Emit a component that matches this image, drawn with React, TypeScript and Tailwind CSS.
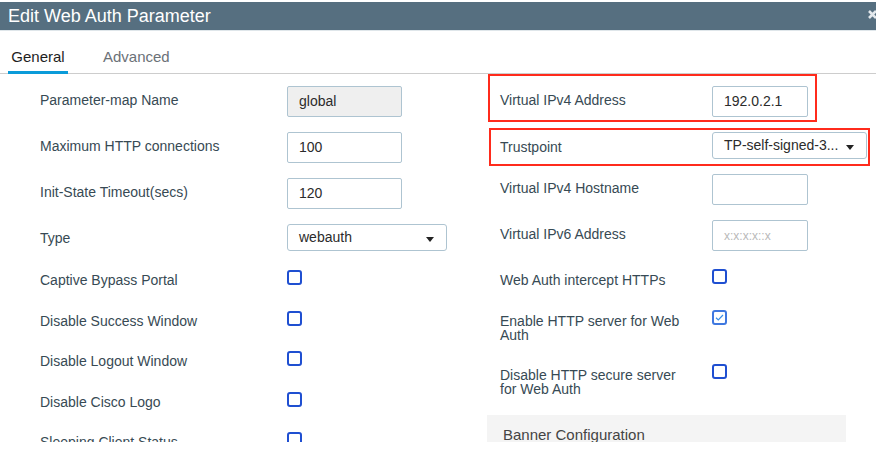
import React from 'react';

// Edit Web Auth Parameter dialog (General tab)

const labelColor = 'text-[#374a54]';

const TextBox = ({ value, placeholder, disabled, w }: { value?: string; placeholder?: string; disabled?: boolean; w: string }) => (
  <div
    className={`flex h-[31px] ${w} items-center rounded-[2px] border border-[#aec4d1] pl-[11px] text-[14px] ${
      disabled ? 'bg-[#efefef]' : 'bg-white'
    }`}
  >
    {value ? (
      <span className="text-[#2b2b2b]">{value}</span>
    ) : (
      <span className="text-[12px] text-[#b9b9b9]">{placeholder}</span>
    )}
  </div>
);

const Select = ({ value, w }: { value: string; w: string }) => (
  <div className={`flex h-[27px] ${w} items-center justify-between rounded-[3px] border border-[#aec4d1] bg-white pl-[11px] pr-[12px] text-[14px] text-[#2b2b2b]`}>
    <span>{value}</span>
    <svg width="8" height="5" viewBox="0 0 8 5" className="mt-[3px]">
      <path d="M0 0 L8 0 L4 5 Z" fill="#222" />
    </svg>
  </div>
);

const Checkbox = ({ checked }: { checked?: boolean }) => (
  <span
    className={`flex h-[15px] w-[15px] items-center justify-center rounded-[3px] border-2 bg-white ${
      checked ? 'border-[#3f78e0]' : 'border-[#1f4fd1]'
    }`}
  >
    {checked && (
      <svg width="9" height="7" viewBox="0 0 9 7">
        <path d="M1 3.8 L3.3 6 L8 1" fill="none" stroke="#3a8ee6" strokeWidth="1.2" />
      </svg>
    )}
  </span>
);

const leftInputs = [
  { label: 'Parameter-map Name', el: <TextBox value="global" disabled w="w-[115px]" /> },
  { label: 'Maximum HTTP connections', el: <TextBox value="100" w="w-[115px]" /> },
  { label: 'Init-State Timeout(secs)', el: <TextBox value="120" w="w-[115px]" /> },
  { label: 'Type', el: <Select value="webauth" w="w-[160px]" /> },
];

const leftChecks = [
  'Captive Bypass Portal',
  'Disable Success Window',
  'Disable Logout Window',
  'Disable Cisco Logo',
  'Sleeping Client Status',
];

export default function App() {
  return (
    <div
      className="h-[458px] w-[876px] overflow-hidden bg-white"
      style={{ fontFamily: '"Liberation Sans", Arial, Helvetica, sans-serif' }}
    >
      {/* header */}
      <div className="mt-[2px] flex h-[29px] items-center justify-between border-b border-[#dfe6ea] bg-[#566f80] pl-[8px]">
        <span className="text-[18px] leading-none text-white">Edit Web Auth Parameter</span>
        <svg width="9" height="9" viewBox="0 0 9 9" className="-mr-[1px] mb-[3px]">
          <path d="M1 1 L8 8 M8 1 L1 8" stroke="#e3e8ec" strokeWidth="2.6" />
        </svg>
      </div>

      {/* tabs */}
      <div className="flex h-[43px] items-end border-b border-[#cdcdcd] pl-[8px]">
        <div className="-mb-[1px] w-[60px] border-b-[3px] border-[#0a9bd9] pb-[4px] text-center text-[15px] leading-[20px] text-[#1e1e1e]">
          General
        </div>
        <div className="ml-[35px] pb-[6px] text-[15px] leading-[20px] text-[#6b7177]">Advanced</div>
      </div>

      {/* body, clipped */}
      <div className="flex h-[368px] overflow-hidden">
        {/* left column */}
        <div className="w-[488px] pt-[4px]">
          {leftInputs.map((r) => (
            <div key={r.label} className="flex h-[46px] items-start">
              <div className={`w-[287px] pl-[40px] pt-[12px] text-[14px] leading-[20px] ${labelColor}`}>{r.label}</div>
              <div className="mt-[8px]">{r.el}</div>
            </div>
          ))}
          {leftChecks.map((l) => (
            <div key={l} className="flex h-[40.5px] items-start pt-[8px]">
              <div className={`w-[287px] pl-[40px] text-[14px] leading-[20px] ${labelColor}`}>{l}</div>
              <Checkbox />
            </div>
          ))}
        </div>

        {/* right column */}
        <div className="flex-1">
          <div className="flex h-[48px] w-[329px] items-start border-2 border-[#ff2b1c]">
            <div className={`w-[222px] pl-[10px] pt-[14px] text-[14px] leading-[20px] ${labelColor}`}>Virtual IPv4 Address</div>
            <div className="mt-[10px]">
              <TextBox value="192.0.2.1" w="w-[96px]" />
            </div>
          </div>

          <div className="ml-[1px] mt-[6px] flex h-[38px] w-[381px] items-start border-2 border-[#ff2b1c]">
            <div className={`w-[221px] pl-[9px] pt-[7px] text-[14px] leading-[20px] ${labelColor}`}>Trustpoint</div>
            <div className="mt-[2px]">
              <Select value="TP-self-signed-3..." w="w-[155px]" />
            </div>
          </div>

          <div className="flex h-[46px] items-start">
            <div className={`w-[224px] pl-[12px] pt-[12px] text-[14px] leading-[20px] ${labelColor}`}>Virtual IPv4 Hostname</div>
            <div className="mt-[8px]">
              <TextBox w="w-[96px]" />
            </div>
          </div>

          <div className="flex h-[46px] items-start">
            <div className={`w-[224px] pl-[12px] pt-[12px] text-[14px] leading-[20px] ${labelColor}`}>Virtual IPv6 Address</div>
            <div className="mt-[8px]">
              <TextBox placeholder="x:x:x:x::x" w="w-[96px]" />
            </div>
          </div>

          <div className="flex h-[41px] items-start">
            <div className={`w-[224px] pl-[12px] pt-[15px] text-[14px] leading-[14px] ${labelColor}`}>Web Auth intercept HTTPs</div>
            <div className="mt-[11px]">
              <Checkbox />
            </div>
          </div>

          <div className="flex h-[54px] items-start">
            <div className={`w-[224px] pl-[12px] pr-[22px] pt-[15px] text-[14px] leading-[14px] ${labelColor}`}>
              Enable HTTP server for Web Auth
            </div>
            <div className="mt-[11px]">
              <Checkbox checked />
            </div>
          </div>

          <div className="flex h-[62px] items-start">
            <div className={`w-[224px] pl-[12px] pr-[22px] pt-[15px] text-[14px] leading-[14px] ${labelColor}`}>
              Disable HTTP secure server for Web Auth
            </div>
            <div className="mt-[11px]">
              <Checkbox />
            </div>
          </div>

          <div className="-ml-[1px] h-[40px] w-[359px] bg-[#f4f4f4] pl-[16px] pt-[12px] text-[15px] leading-[16px] text-[#444]">
            Banner Configuration
          </div>
        </div>
      </div>
    </div>
  );
}
